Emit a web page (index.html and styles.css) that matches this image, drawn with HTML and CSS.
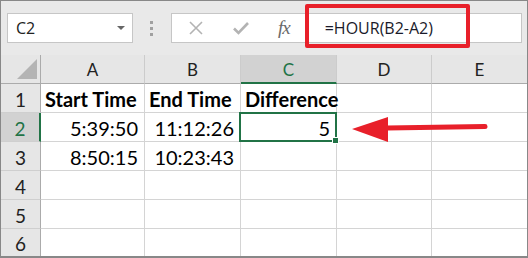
FILE: index.html
```html
<!DOCTYPE html>
<html lang="en">
<head>
    <meta charset="UTF-8">
    <title>HOUR formula</title>
    <link rel="stylesheet" href="styles.css">
</head>
<body>
    <div class="frame">
        <!-- Name box and formula bar -->
        <div class="toolbar">
            <div class="namebox">
                <span>C2</span>
                <span class="drop"></span>
            </div>
            <div class="grip"><i></i><i></i><i></i></div>
            <div class="formulabar">
                <svg class="tool cancel" width="14" height="14" viewBox="0 0 14 14">
                    <path d="M1 1 L13 13 M13 1 L1 13" stroke="#b3b3b3" stroke-width="1.6" fill="none"/>
                </svg>
                <svg class="tool enter" width="16" height="14" viewBox="0 0 16 14">
                    <path d="M1 7.5 L5.5 12 L15 2" stroke="#b3b3b3" stroke-width="2.6" fill="none"/>
                </svg>
                <span class="fx">fx</span>
                <span class="formula">=HOUR(B2-A2)</span>
            </div>
            <div class="highlight"></div>
        </div>

        <!-- Worksheet grid -->
        <div class="sheet">
            <div class="hd corner"><span class="tri"></span></div>
            <div class="hd col">A</div>
            <div class="hd col">B</div>
            <div class="hd col sel">C</div>
            <div class="hd col">D</div>
            <div class="hd col last">E</div>

            <div class="hd row">1</div>
            <div class="cell bold">Start Time</div>
            <div class="cell bold">End Time</div>
            <div class="cell bold">Difference</div>
            <div class="cell"></div>
            <div class="cell last"></div>

            <div class="hd row sel">2</div>
            <div class="cell num">5:39:50</div>
            <div class="cell num">11:12:26</div>
            <div class="cell num active">5</div>
            <div class="cell"></div>
            <div class="cell last"></div>

            <div class="hd row">3</div>
            <div class="cell num">8:50:15</div>
            <div class="cell num">10:23:43</div>
            <div class="cell"></div>
            <div class="cell"></div>
            <div class="cell last"></div>

            <div class="hd row">4</div>
            <div class="cell"></div>
            <div class="cell"></div>
            <div class="cell"></div>
            <div class="cell"></div>
            <div class="cell last"></div>

            <div class="hd row">5</div>
            <div class="cell"></div>
            <div class="cell"></div>
            <div class="cell"></div>
            <div class="cell"></div>
            <div class="cell last"></div>

            <div class="hd row">6</div>
            <div class="cell"></div>
            <div class="cell"></div>
            <div class="cell"></div>
            <div class="cell"></div>
            <div class="cell last"></div>
        </div>

        <!-- Red pointer arrow -->
        <svg class="arrow" width="140" height="30" viewBox="0 0 140 30">
            <path d="M36 13 L134 11.5" stroke="#e8202a" stroke-width="5" stroke-linecap="round" fill="none"/>
            <polygon points="1,14 37,2 37,27" fill="#e8202a"/>
        </svg>
    </div>
</body>
</html>
```

FILE: styles.css
```css
* {
    box-sizing: border-box;
}
body {
    margin: 0;
    background: #ffffff;
}
.frame {
    position: relative;
    width: 528px;
    height: 258px;
    border: 1px solid #888888;
    border-bottom-width: 2px;
    background: #ffffff;
    overflow: hidden;
}
.toolbar {
    position: relative;
    display: flex;
    align-items: flex-start;
    height: 54px;
    padding: 12px 0 0 6px;
    background: #e9e9e9;
}
.namebox {
    display: flex;
    align-items: center;
    justify-content: space-between;
    width: 126px;
    height: 30px;
    padding: 0 7px 0 8px;
    background: #ffffff;
    border: 1px solid #c6c6c6;
    font-family: "Open Sans", sans-serif;
    font-size: 16px;
    color: #222222;
}
.drop {
    width: 0;
    height: 0;
    border-left: 4px solid transparent;
    border-right: 4px solid transparent;
    border-top: 4px solid #666666;
}
.grip {
    display: flex;
    flex-direction: column;
    gap: 3px;
    width: 38px;
    padding: 8px 0 0 17px;
}
.grip i {
    display: block;
    width: 3px;
    height: 3px;
    background: #a0a0a0;
}
.formulabar {
    display: flex;
    align-items: center;
    width: 351px;
    height: 30px;
    background: #ffffff;
    border: 1px solid #c6c6c6;
}
.tool.cancel {
    margin-left: 17px;
}
.tool.enter {
    margin-left: 30px;
}
.fx {
    margin-left: 29px;
    font-family: "Liberation Serif", serif;
    font-style: italic;
    font-size: 19px;
    color: #6a6a6a;
    letter-spacing: -1px;
}
.formula {
    margin-left: 35px;
    font-family: "Open Sans", sans-serif;
    font-size: 16px;
    color: #1a1a2a;
}
.highlight {
    position: absolute;
    left: 304px;
    top: 3px;
    width: 165px;
    height: 44px;
    border: 4px solid #e8202a;
    border-radius: 2px;
}
.sheet {
    display: grid;
    grid-template-columns: 40px 104px 96px 96px 95px 95px;
    grid-template-rows: repeat(6, 29px) 28px;
}
.hd {
    display: flex;
    align-items: center;
    justify-content: center;
    background: #e6e6e6;
    font-family: "Lato", sans-serif;
    font-size: 18px;
    color: #222222;
}
.hd.col {
    padding-top: 1px;
    border-right: 1px solid #cccccc;
    border-bottom: 1px solid #ababab;
    font-size: 17px;
}
.hd.col.last {
    border-right: none;
}
.hd.corner {
    position: relative;
    border-right: 1px solid #ababab;
    border-bottom: 1px solid #ababab;
}
.tri {
    position: absolute;
    right: 3px;
    bottom: 4px;
    width: 0;
    height: 0;
    border-left: 20px solid transparent;
    border-bottom: 20px solid #b4b4b4;
}
.hd.row {
    padding-top: 2px;
    border-right: 1px solid #ababab;
    border-bottom: 1px solid #cfcfcf;
    font-size: 19px;
}
.hd.col.sel {
    background: #d2d2d2;
    border-bottom: 2px solid #217346;
    color: #217346;
}
.hd.row.sel {
    background: #d2d2d2;
    border-right: 2px solid #217346;
    color: #217346;
}
.cell {
    display: flex;
    align-items: center;
    padding: 2px 6px 0 4px;
    border-right: 1px solid #d4d4d4;
    border-bottom: 1px solid #d4d4d4;
    font-family: "Lato", sans-serif;
    font-size: 20px;
    color: #000000;
    white-space: nowrap;
}
.cell.last {
    border-right: none;
}
.cell.bold {
    font-weight: bold;
    overflow: visible;
}
.cell.num {
    justify-content: flex-end;
}
.cell.active {
    position: relative;
}
.cell.active::before {
    content: "";
    position: absolute;
    left: -2px;
    top: -1px;
    right: -1px;
    bottom: -1px;
    border: 2px solid #217346;
}
.cell.active::after {
    content: "";
    position: absolute;
    right: -3px;
    bottom: -3px;
    width: 5px;
    height: 5px;
    background: #217346;
    border: 1px solid #ffffff;
}
.arrow {
    position: absolute;
    left: 350px;
    top: 114px;
}
```
